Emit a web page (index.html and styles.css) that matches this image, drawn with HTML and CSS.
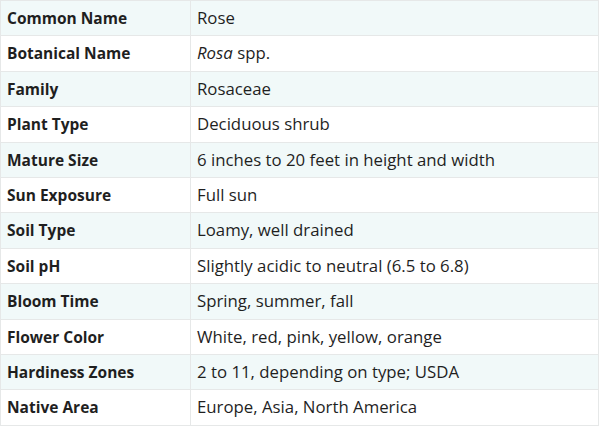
FILE: index.html
```html
<!DOCTYPE html>
<html>
<head>
<meta charset="utf-8">
<link rel="stylesheet" href="styles.css">
</head>
<body>
<table class="facts">
<tbody>
<tr><th>Common Name</th><td>Rose</td></tr>
<tr><th>Botanical Name</th><td><em>Rosa</em> spp.</td></tr>
<tr><th>Family</th><td>Rosaceae</td></tr>
<tr><th>Plant Type</th><td>Deciduous shrub</td></tr>
<tr><th>Mature Size</th><td>6 inches to 20 feet in height and width</td></tr>
<tr><th>Sun Exposure</th><td>Full sun</td></tr>
<tr><th>Soil Type</th><td>Loamy, well drained</td></tr>
<tr><th>Soil pH</th><td>Slightly acidic to neutral (6.5 to 6.8)</td></tr>
<tr><th>Bloom Time</th><td>Spring, summer, fall</td></tr>
<tr><th>Flower Color</th><td>White, red, pink, yellow, orange</td></tr>
<tr><th>Hardiness Zones</th><td>2 to 11, depending on type; USDA</td></tr>
<tr><th>Native Area</th><td>Europe, Asia, North America</td></tr>
</tbody>
</table>
</body>
</html>
```
FILE: styles.css
```css
html, body {
  margin: 0;
  padding: 0;
  background: #fff;
}
.facts {
  width: 599px;
  border-collapse: collapse;
  font-family: "Open Sans", sans-serif;
  line-height: 22.4px;
  color: #1f1f1f;
}
.facts th, .facts td {
  border: 1px solid #e6e8e8;
  padding: 6px 6px;
  text-align: left;
  vertical-align: middle;
}
.facts th {
  width: 177px;
  font-size: 15.5px;
  font-weight: 700;
}
.facts td {
  font-size: 16.8px;
  font-weight: 400;
}
.facts tr:nth-child(odd) {
  background: #f1f9f9;
}
```
